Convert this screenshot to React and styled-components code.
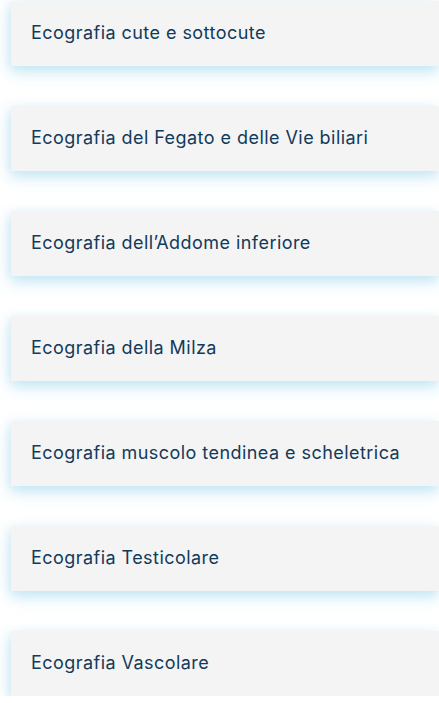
import React from "react";
import styled, { createGlobalStyle } from "styled-components";

const Global = createGlobalStyle`
  html, body { margin: 0; padding: 0; background: #ffffff; }
  body { font-family: "Inter", "Noto Sans", sans-serif; overflow: hidden; }
`;

const List = styled.div`
  display: flex;
  flex-direction: column;
  gap: 40px;
  padding: 1px 0 0 11px;
`;

const Card = styled.div`
  height: 65px;
  display: flex;
  align-items: center;
  padding-left: 20px;
  padding-bottom: 2px;
  box-sizing: border-box;
  background: #f4f4f4;
  box-shadow: 0 6px 14px rgba(110, 200, 235, 0.38), -3px 2px 10px rgba(160, 200, 220, 0.18);
`;

const Label = styled.span`
  font-size: 18px;
  color: #123a5a;
  letter-spacing: 0.45px;
`;

const items = [
  "Ecografia cute e sottocute",
  "Ecografia del Fegato e delle Vie biliari",
  "Ecografia dell’Addome inferiore",
  "Ecografia della Milza",
  "Ecografia muscolo tendinea e scheletrica",
  "Ecografia Testicolare",
  "Ecografia Vascolare",
];

export default function App() {
  return (
    <>
      <Global />
      <List>
        {items.map((t) => (
          <Card key={t}>
            <Label>{t}</Label>
          </Card>
        ))}
      </List>
    </>
  );
}
